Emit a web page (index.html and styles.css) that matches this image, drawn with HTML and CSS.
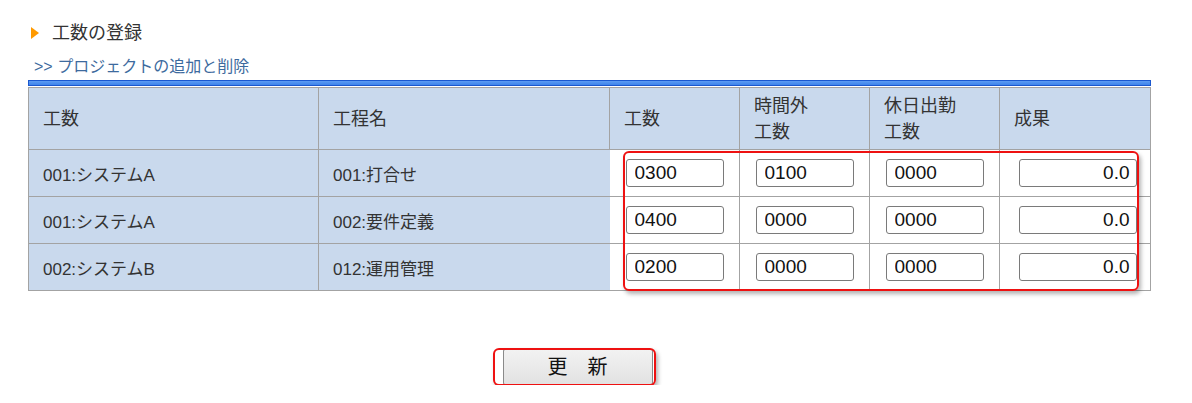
FILE: index.html
```html
<!DOCTYPE html>
<html lang="ja">
<head>
<meta charset="utf-8">
<title>工数の登録</title>
<link rel="stylesheet" href="styles.css">
</head>
<body>
<div class="page">
  <h1 class="title"><span class="tri"></span>工数の登録</h1>
  <a class="link" href="#">&gt;&gt; プロジェクトの追加と削除</a>
  <div class="bar"></div>
  <div class="table-wrap">
    <table class="grid">
      <colgroup>
        <col class="w1"><col class="w2"><col class="w3"><col class="w3"><col class="w3"><col class="w6">
      </colgroup>
      <thead>
        <tr>
          <th>工数</th>
          <th>工程名</th>
          <th>工数</th>
          <th>時間外<br>工数</th>
          <th>休日出勤<br>工数</th>
          <th>成果</th>
        </tr>
      </thead>
      <tbody>
        <tr>
          <td class="lbl">001:システムA</td>
          <td class="lbl lbl2">001:打合せ</td>
          <td class="inp"><input class="num" value="0300"></td>
          <td class="inp"><input class="num" value="0100"></td>
          <td class="inp"><input class="num" value="0000"></td>
          <td class="inp"><input class="num wide" value="0.0"></td>
        </tr>
        <tr>
          <td class="lbl">001:システムA</td>
          <td class="lbl lbl2">002:要件定義</td>
          <td class="inp"><input class="num" value="0400"></td>
          <td class="inp"><input class="num" value="0000"></td>
          <td class="inp"><input class="num" value="0000"></td>
          <td class="inp"><input class="num wide" value="0.0"></td>
        </tr>
        <tr>
          <td class="lbl">002:システムB</td>
          <td class="lbl lbl2">012:運用管理</td>
          <td class="inp"><input class="num" value="0200"></td>
          <td class="inp"><input class="num" value="0000"></td>
          <td class="inp"><input class="num" value="0000"></td>
          <td class="inp"><input class="num wide" value="0.0"></td>
        </tr>
      </tbody>
    </table>
    <div class="mark mark-inputs"></div>
  </div>
  <div class="actions">
    <div class="btn-wrap">
      <button class="btn" type="button">更　新</button>
      <div class="mark mark-btn"></div>
    </div>
  </div>
</div>
</body>
</html>
```
FILE: styles.css
```css
html, body {
  margin: 0;
  padding: 0;
  background: #ffffff;
}
body {
  font-family: "Liberation Sans", "Noto Sans CJK JP", sans-serif;
  color: #333333;
}
.page {
  padding: 22px 0 0 28px;
  width: 1123px;
}
.title {
  margin: 0;
  display: flex;
  align-items: center;
  height: 22px;
  font-size: 18px;
  font-weight: normal;
  line-height: 22px;
  color: #333333;
}
.tri {
  width: 0;
  height: 0;
  border-top: 6px solid transparent;
  border-bottom: 6px solid transparent;
  border-left: 8px solid #ff9a00;
  margin: 0 13px 0 3px;
}
.link {
  display: block;
  margin-top: 12px;
  padding-left: 6px;
  height: 22px;
  line-height: 22px;
  font-size: 16px;
  color: #3d6a9e;
  text-decoration: none;
}
.bar {
  margin-top: 2px;
  height: 4px;
  border: 1px solid #1b58cf;
  background: linear-gradient(#5d9cf3, #3f84ea);
}
.table-wrap {
  position: relative;
  margin-top: 1px;
}
.grid {
  border-collapse: collapse;
  table-layout: fixed;
  width: 1123px;
  font-size: 17px;
}
.w1 { width: 290px; }
.w2 { width: 291px; }
.w3 { width: 130px; }
.w6 { width: 151px; }
.grid th, .grid td {
  border: 1px solid #a3a3a3;
  padding: 0 0 0 14px;
  text-align: left;
  font-weight: normal;
  vertical-align: middle;
}
.grid th {
  background: #c9d9ed;
  height: 61px;
  line-height: 26px;
  font-size: 18px;
}
.grid td {
  height: 46px;
}
.grid td.lbl {
  background: #c9d9ed;
}
.grid td.lbl2 {
  border-right-color: #c9d9ed;
}
.grid td.inp {
  background: #ffffff;
  text-align: center;
  padding: 0;
}
.num {
  box-sizing: border-box;
  width: 98px;
  height: 28px;
  border: 1px solid #7a7a7a;
  border-radius: 3px;
  padding: 0 8px;
  font-family: "Liberation Sans", sans-serif;
  font-size: 19px;
  color: #111111;
  background: #ffffff;
  vertical-align: middle;
}
.num.wide {
  width: 118px;
  margin-left: 5px;
  text-align: right;
  padding-right: 6px;
}
.mark {
  position: absolute;
  border: 2px solid #ee1111;
  border-radius: 6px;
  box-shadow: 2px 3px 4px rgba(0, 0, 0, 0.3);
  pointer-events: none;
}
.mark-inputs {
  left: 595px;
  top: 64px;
  width: 512px;
  height: 136px;
}
.actions {
  display: flex;
  justify-content: center;
  padding-top: 58px;
  width: 1099px;
}
.btn-wrap {
  position: relative;
}
.btn {
  width: 150px;
  height: 36px;
  border: 1px solid #8a8a8a;
  border-radius: 2px;
  background: linear-gradient(#f2f2f2, #e2e2e2);
  font-family: "Liberation Sans", "Noto Sans CJK JP", sans-serif;
  font-size: 20px;
  color: #111111;
  padding: 0;
  line-height: 34px;
}
.mark-btn {
  left: -10px;
  top: -1px;
  width: 159px;
  height: 34px;
}
```
